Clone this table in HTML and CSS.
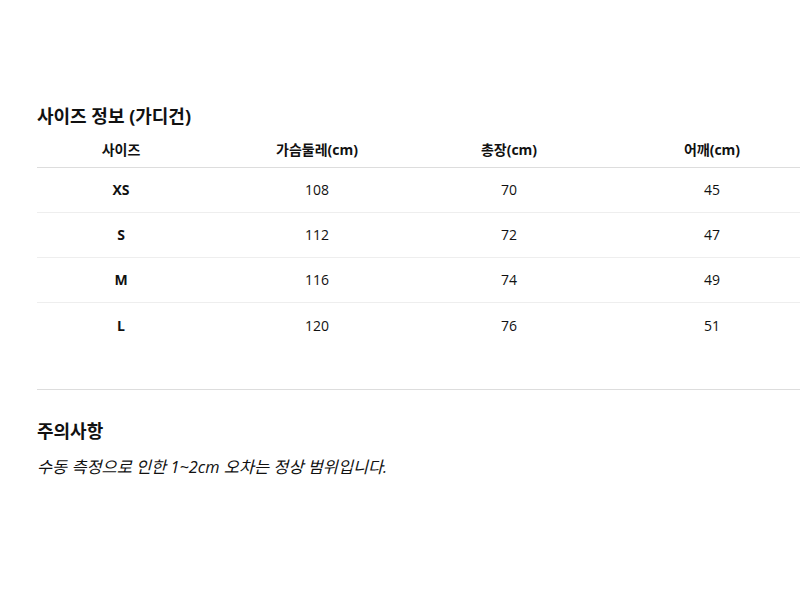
FILE: index.html
```html
<!DOCTYPE html>
<html lang="ko">
<head>
<meta charset="utf-8">
<title>사이즈 정보</title>
<link rel="stylesheet" href="styles.css">
</head>
<body>
<main class="page">
  <section class="size-section">
    <h2 class="section-title">사이즈 정보 (가디건)</h2>
    <table class="size-table">
      <colgroup>
        <col class="c1"><col class="c2"><col class="c3"><col class="c4">
      </colgroup>
      <thead>
        <tr><th>사이즈</th><th>가슴둘레(cm)</th><th>총장(cm)</th><th>어깨(cm)</th></tr>
      </thead>
      <tbody>
        <tr><td class="size">XS</td><td>108</td><td>70</td><td>45</td></tr>
        <tr><td class="size">S</td><td>112</td><td>72</td><td>47</td></tr>
        <tr><td class="size">M</td><td>116</td><td>74</td><td>49</td></tr>
        <tr><td class="size">L</td><td>120</td><td>76</td><td>51</td></tr>
      </tbody>
    </table>
  </section>
  <hr class="divider">
  <section class="notice">
    <h3 class="notice-title">주의사항</h3>
    <p class="notice-text">수동 측정으로 인한 1~2cm 오차는 정상 범위입니다.</p>
  </section>
</main>
</body>
</html>
```
FILE: styles.css
```css
html, body {
  margin: 0;
  padding: 0;
  background: #fff;
  overflow: hidden;
}
body {
  font-family: "Open Sans", "Noto Sans CJK KR", sans-serif;
  color: #111;
}
.page {
  padding: 103px 0 0 37px;
  width: 798px;
}
.section-title {
  margin: 0 0 6px 0;
  font-size: 18px;
  font-weight: 700;
  line-height: 26px;
}
.size-table {
  width: 798px;
  border-collapse: collapse;
  table-layout: fixed;
  font-size: 14px;
}
.c1 { width: 168px; }
.c2 { width: 224px; }
.c3 { width: 160px; }
.c4 { width: 246px; }
.size-table th {
  font-weight: 700;
  height: 30px;
  padding: 0 0 2px 0;
  text-align: center;
  border-bottom: 1px solid #ddd;
  line-height: 20px;
}
.size-table td {
  height: 44px;
  padding: 0;
  text-align: center;
  border-bottom: 1px solid #eee;
  line-height: 20px;
}
.size-table tbody tr:last-child td {
  border-bottom: none;
  height: 45px;
}
.size-table td.size {
  font-weight: 700;
}
.divider {
  margin: 41px 0 0 0;
  border: none;
  border-top: 1px solid #ddd;
  height: 0;
}
.notice-title {
  margin: 28px 0 0 0;
  font-size: 18px;
  font-weight: 700;
  line-height: 26px;
}
.notice-text {
  margin: 11px 0 0 0;
  font-size: 16.4px;
  font-style: italic;
  line-height: 24px;
}
```
